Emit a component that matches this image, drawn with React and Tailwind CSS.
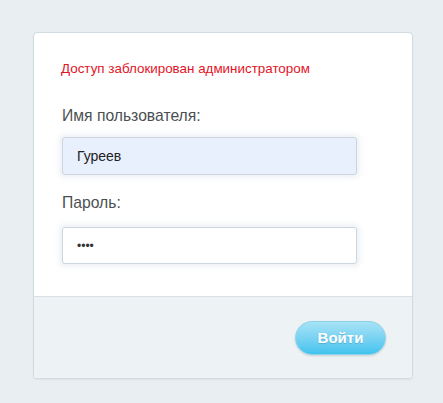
import { useState } from 'react'

export default function App() {
  const [login, setLogin] = useState('Гуреев')
  const [pass, setPass] = useState('1234')

  return (
    <div className="min-h-[403px] w-full bg-[#e8eef1] pt-[32px] pl-[33px] font-['Liberation_Sans',Arial,sans-serif]">
      <div className="w-[380px] overflow-hidden rounded-[4px] border border-[#d2dbe0] bg-white shadow-[0_1px_2px_rgba(0,0,0,0.05)]">
        {/* form body */}
        <div className="pl-[27px] pr-[24px] pt-[28px] pb-[32px]">
          <p className="text-[13.4px] leading-[16px] text-[#e3141f]">Доступ заблокирован администратором</p>

          <label className="mt-[30px] block pl-[1px] text-[15.7px] leading-[18px] text-[#4b4f52]">Имя пользователя:</label>
          <input
            value={login}
            onChange={(e) => setLogin(e.target.value)}
            className="mt-[12px] ml-[1px] block h-[38px] w-[295px] rounded-[3px] border border-[#cdd6dc] bg-[#e8f0fe] px-[14px] text-[14px] text-[#222] outline-none shadow-[0_0_5px_3px_rgba(215,225,232,0.45)]"
          />

          <label className="mt-[19px] block pl-[1px] text-[15.7px] leading-[18px] text-[#4b4f52]">Пароль:</label>
          <input
            type="password"
            value={pass}
            onChange={(e) => setPass(e.target.value)}
            className="mt-[15px] ml-[1px] block h-[37px] w-[295px] rounded-[3px] border border-[#cdd6dc] bg-white px-[14px] text-[12px] tracking-[0px] text-[#333] outline-none shadow-[0_0_5px_3px_rgba(215,225,232,0.45)]"
          />
        </div>

        {/* footer */}
        <div className="flex h-[82px] justify-end border-t border-[#d8e1e5] bg-[#edf3f5] pt-[24px] pr-[26px]">
          <button className="h-[34px] w-[91px] rounded-full border border-[#8fd3ea] bg-gradient-to-b from-[#a6e2f6] to-[#3fc3ee] text-[15px] font-bold text-white shadow-[0_1px_2px_rgba(0,0,0,0.15)] [text-shadow:0_1px_1px_rgba(0,80,120,0.25)]">
            Войти
          </button>
        </div>
      </div>
    </div>
  )
}
